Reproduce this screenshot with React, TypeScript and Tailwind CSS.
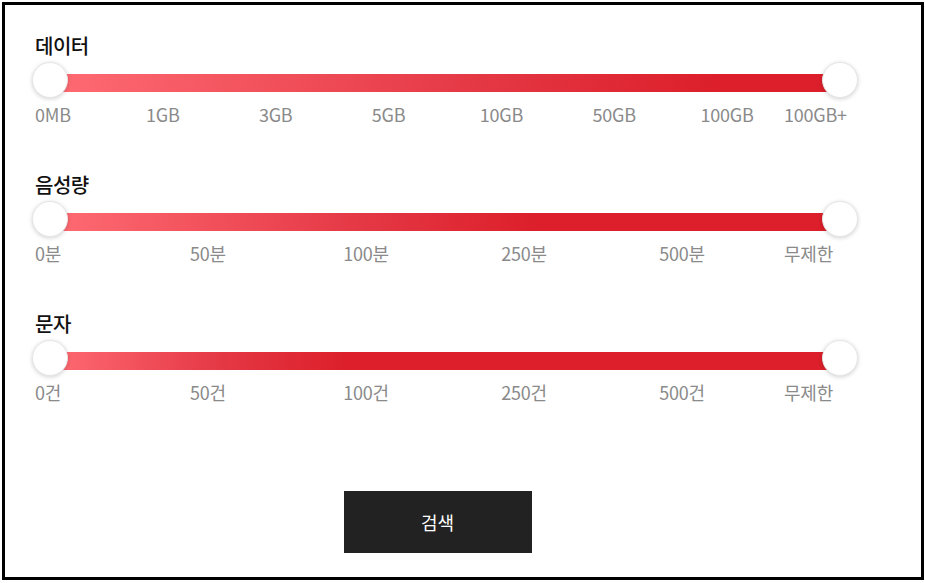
import React from "react";

type Row = {
  title: string;
  labels: string[];
  gradient: string;
};

const rows: Row[] = [
  {
    title: "데이터",
    labels: ["0MB", "1GB", "3GB", "5GB", "10GB", "50GB", "100GB", "100GB+"],
    gradient: "bg-[linear-gradient(90deg,#ff6b73_0%,#e43744_55%,#dc1f2a_85%,#dc1f2a_100%)]",
  },
  {
    title: "음성량",
    labels: ["0분", "50분", "100분", "250분", "500분", "무제한"],
    gradient: "bg-[linear-gradient(90deg,#ff6b73_0%,#e43744_40%,#dc1f2a_62%,#dc1f2a_100%)]",
  },
  {
    title: "문자",
    labels: ["0건", "50건", "100건", "250건", "500건", "무제한"],
    gradient: "bg-[linear-gradient(90deg,#ff6b73_0%,#e43744_22%,#dc1f2a_38%,#dc1f2a_100%)]",
  },
];

function Thumb() {
  return (
    <div className="w-[36px] h-[36px] rounded-full bg-white border border-[#e6e6e6] shadow-[0_1px_4px_rgba(0,0,0,0.18)] shrink-0" />
  );
}

function SliderRow({ row }: { row: Row }) {
  const n = row.labels.length;
  return (
    <div className="flex flex-col">
      <div className="h-[28px] leading-[28px] pl-[30px] text-[20px] font-medium text-[#111111] tracking-[-0.5px]">
        {row.title}
      </div>
      <div className="mt-[2px] ml-[27px] w-[826px] h-[36px] relative">
        <div className={`absolute left-[18px] right-[18px] top-[12px] h-[18px] ${row.gradient}`} />
        <div className="absolute left-0 top-0">
          <Thumb />
        </div>
        <div className="absolute right-0 top-0">
          <Thumb />
        </div>
      </div>
      <div className="mt-[4px] ml-[45px] w-[790px] h-[24px] flex justify-between text-[18px] leading-[24px] text-[#8a8a8a] tracking-[-0.2px]">
        {row.labels.map((l, i) => {
          if (i === 0)
            return (
              <div key={l} className="w-0 flex justify-start">
                <span className="whitespace-nowrap -ml-[15px]">{l}</span>
              </div>
            );
          if (i === n - 1)
            return (
              <div key={l} className="w-0 flex justify-start">
                <span className="whitespace-nowrap -ml-[56px]">{l}</span>
              </div>
            );
          return (
            <div key={l} className="w-0 flex justify-center">
              <span className="whitespace-nowrap">{l}</span>
            </div>
          );
        })}
      </div>
    </div>
  );
}

export default function App() {
  return (
    <div
      className="w-[925px] h-[583px] bg-white"
      style={{ fontFamily: '"Noto Sans CJK KR", "Noto Sans", sans-serif' }}
    >
      <div className="ml-[2px] mt-[2px] w-[922px] h-[578px] border-[3px] border-black bg-white flex flex-col">
        <div className="pt-[27px] flex flex-col gap-[45px]">
          {rows.map((r) => (
            <SliderRow key={r.title} row={r} />
          ))}
        </div>
        <div className="mt-[87px] pl-[30px] w-[835px] flex justify-center">
          <button className="w-[188px] h-[62px] bg-[#222222] text-white text-[18px] font-normal">
            검색
          </button>
        </div>
      </div>
    </div>
  );
}
